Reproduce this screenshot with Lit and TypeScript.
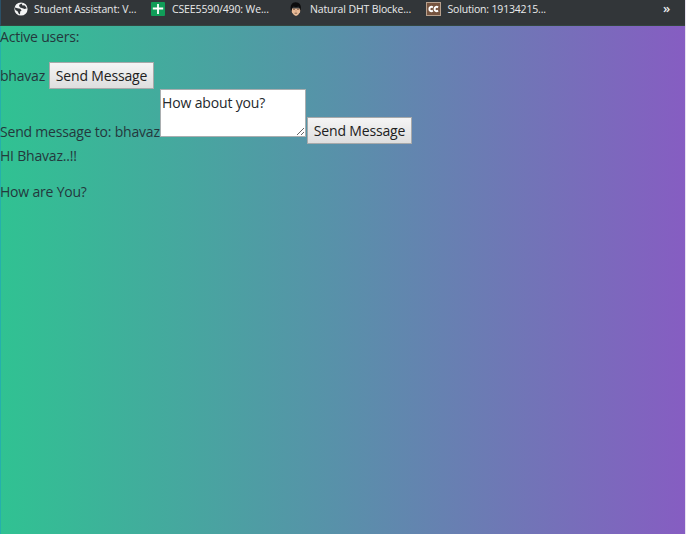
import { LitElement, html, css, svg } from "lit";
import { customElement } from "lit/decorators.js";

const globe = svg`<circle cx="7" cy="7" r="6.6" fill="#f4f4f4"/><path d="M.8 5.6 3.6 6.2 6.2 6.8 7.6 8.4 6.2 9.4 6 12.4 4.6 11.6 3.8 9.4 1.4 8ZM5.6 2.6 8.2 1.6 8 3.2 10.8 3.4 12.8 6.2 10.6 7 8.6 6.2 6.2 5.4 5 4Z" fill="#33373a"/>`;
const sheet = svg`<rect width="14" height="14" rx="1" fill="#109d58"/><path d="M6.1 2h1.8v3.6h4.3v1.8H7.9V12H6.1V7.4H1.8V5.6h4.3Z" fill="#fff"/>`;
const face = svg`<path d="M2.2 6.5 3 10.5l2 2.6 2 .8 2-.8 2-2.8.6-3.8Z" fill="#e9bc98"/><path d="M1.8 8C.9 3.5 3 .2 6.6.2c4 0 6 3 5.2 7.6l-.8 1-.3-2.6L9.5 4.4 7 5.2 4.5 4.4 3 6.2 2.8 9Z" fill="#0c0c0d"/><path d="M4 7.3h2M8 7.3h2M5.6 11.2h2.6" stroke="#6b4a3a" stroke-width=".8"/><path d="M7 8v1.6" stroke="#c38f70" stroke-width=".8"/>`;
const cc = svg`<rect x=".5" y=".5" width="14" height="13" fill="#76543f" stroke="#b7a08d"/><path d="M6.9 5.3C4.9 4.2 3.4 5.2 3.4 7s1.5 2.8 3.5 1.7M12.1 5.3c-2-1.1-3.5-.1-3.5 1.7s1.5 2.8 3.5 1.7" fill="none" stroke="#fff" stroke-width="2"/>`;

@customElement("app-root")
export class AppRoot extends LitElement {
  static styles = css`
    :host {
      display: flex;
      flex-direction: column;
      box-sizing: border-box;
      width: 686px;
      height: 534px;
      overflow: hidden;
      color: #24383d;
      font: 14px/22px "Open Sans", "Noto Sans", sans-serif;
      letter-spacing: -0.2px;
      background: #e8e3f1;
      padding-right: 1px;
    }
    .bookmarks {
      display: flex;
      flex: none;
      height: 26px;
      box-sizing: border-box;
      border-bottom: 1px solid #33453f;
      border-left: 1px solid #2b5067;
      background: #323639;
      color: #e9eaeb;
      font: 10.5px/18px "Open Sans", sans-serif;
      letter-spacing: -0.13px;
      padding-left: 12.5px;
      white-space: nowrap;
    }
    .bookmark { display: flex; flex: none; }
    .bookmark svg { display: block; flex: none; margin-top: 2px; width: 15px; height: 14px; }
    .title { margin-left: 5.5px; }
    .b1 { width: 137px; }
    .b2 { width: 138px; }
    .b3 { width: 137px; }
    .b2 .title { margin-left: 6.5px; }
    .b3 .title { margin-left: 6.5px; }
    .b4 .title { margin-left: 7px; letter-spacing: -0.18px; }
    .more { margin-left: auto; margin-right: 15px; font-size: 13px; line-height: 16px; font-weight: 600; }
    .page {
      flex: 1;
      border-left: 1px solid #25b0ab;
      background: linear-gradient(to right, #30c292, #5990aa 50%, #865dc2);
    }
    .line { display: flex; white-space: pre; margin-left: -1px; }
    .active { height: 36px; box-sizing: border-box; }
    .user { height: 27px; line-height: 27px; gap: 4px; }
    .name { width: 45px; }
    .compose { height: 55px; align-items: flex-end; }
    .to { width: 160px; line-height: 25px; }
    .compose button { margin-left: 1px; }
    .first { height: 36px; line-height: 24px; }
    .second { line-height: 24px; }
    button {
      box-sizing: border-box;
      width: 105px;
      height: 27px;
      padding: 0;
      border: 1px solid #a7a9aa;
      border-radius: 0;
      background: linear-gradient(#f5f5f5, #dedede);
      color: #202020;
      font: inherit;
      letter-spacing: -0.15px;
      line-height: 25px;
      white-space: nowrap;
    }
    textarea {
      box-sizing: border-box;
      width: 146px;
      height: 48px;
      margin: 0;
      align-self: flex-start;
      padding: 1px;
      border: 1px solid #a9aeb0;
      background: #fff;
      color: #24282c;
      font: inherit;
      letter-spacing: -0.15px;
      line-height: 23px;
      overflow: hidden;
      resize: both;
    }
  `;

  private bookmark(name: string, icon: unknown, title: string) {
    return html`<div class="bookmark ${name}"><svg viewBox="0 0 15 14">${icon}</svg><span class="title">${title}</span></div>`;
  }

  render() {
    return html`
      <nav class="bookmarks">
        ${this.bookmark("b1", globe, "Student Assistant: V...")}
        ${this.bookmark("b2", sheet, "CSEE5590/490: We...")}
        ${this.bookmark("b3", face, "Natural DHT Blocke...")}
        ${this.bookmark("b4", cc, "Solution: 19134215...")}
        <span class="more">»</span>
      </nav>
      <main class="page">
        <div class="line active">Active users:</div>
        <div class="line user"><span class="name">bhavaz</span><button>Send Message</button></div>
        <div class="line compose"><span class="to">Send message to: bhavaz</span><textarea .value=${"How about you?"}></textarea><button>Send Message</button></div>
        <div class="line first">HI Bhavaz..!!</div>
        <div class="line second">How are You?</div>
      </main>
    `;
  }
}
